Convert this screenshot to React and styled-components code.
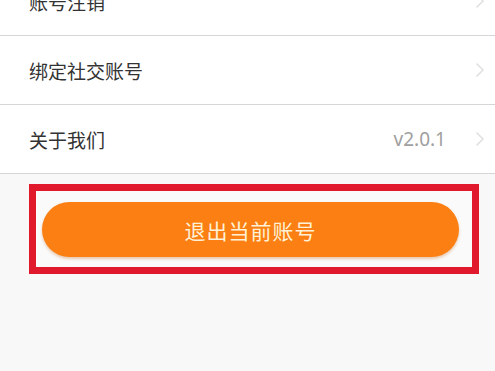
import React from 'react'
import styled, { createGlobalStyle } from 'styled-components'

const GlobalStyle = createGlobalStyle`
  html, body {
    margin: 0;
    padding: 0;
    background: #f8f8f9;
    font-family: "Noto Sans CJK SC", "Noto Sans", sans-serif;
    overflow: hidden;
  }
`

const rows = [
  { label: '账号注销' },
  { label: '绑定社交账号' },
  { label: '关于我们', value: 'v2.0.1' },
]

const Chevron = () => (
  <svg width="10" height="16" viewBox="0 0 10 16">
    <polyline points="2,2 8,8 2,14" fill="none" stroke="#e0e0e0" strokeWidth="1.6" strokeLinecap="round" strokeLinejoin="round" />
  </svg>
)

const App = () => {
  return (
    <Page>
      <GlobalStyle />
      <List>
        {rows.map((r) => (
          <Row key={r.label}>
            <Label>{r.label}</Label>
            <Right>
              {r.value && <Value>{r.value}</Value>}
              <Chevron />
            </Right>
          </Row>
        ))}
      </List>
      <Highlight>
        <LogoutButton>退出当前账号</LogoutButton>
      </Highlight>
    </Page>
  )
}

export default App

const Page = styled.div`
  width: 495px;
  height: 371px;
  background: #f8f8f9;
`

const List = styled.div`
  margin-top: -33px;
  background: #fff;
`

const Row = styled.div`
  height: 68px;
  display: flex;
  align-items: center;
  justify-content: space-between;
  padding: 0 10px 0 29px;
  border-bottom: 1px solid #d6d6d6;
`

const Label = styled.span`
  font-size: 19px;
  color: #333;
`

const Right = styled.div`
  display: flex;
  align-items: center;
  gap: 29px;
`

const Value = styled.span`
  font-family: "Noto Sans", "Open Sans", sans-serif;
  font-size: 19px;
  color: #a0a0a0;
`

const Highlight = styled.div`
  margin: 10px 0 0 29px;
  width: 450px;
  height: 90px;
  box-sizing: border-box;
  border: 7px solid #e1192c;
  background: #fafafb;
  padding: 11px 13px 0 6px;
`

const LogoutButton = styled.button`
  width: 100%;
  height: 55px;
  border: none;
  border-radius: 28px;
  background: #fb7f12;
  color: #fff1d6;
  font-family: "Noto Sans CJK SC", sans-serif;
  font-size: 21px;
  letter-spacing: 1px;
  box-shadow: 0 2px 3px rgba(200, 110, 30, 0.35);
  cursor: pointer;
`
